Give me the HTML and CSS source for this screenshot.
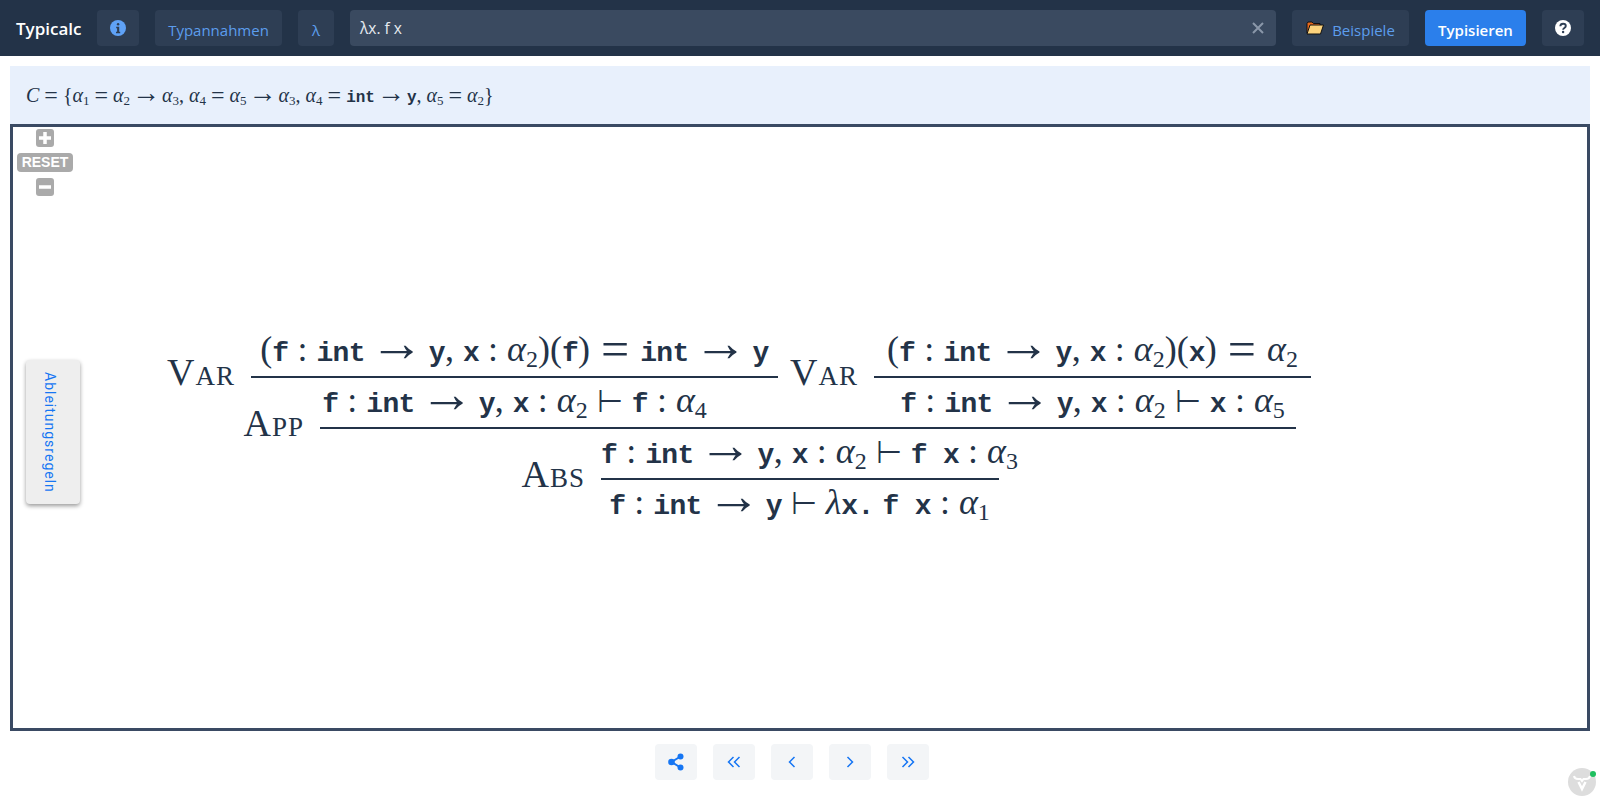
FILE: index.html
```html
<!DOCTYPE html>
<html lang="de">
<head>
    <meta charset="UTF-8">
    <title>Typicalc</title>
    <link rel="stylesheet" href="styles.css">
</head>
<body>
    <header class="topbar">
        <span class="app-title">Typicalc</span>
        <button class="btn btn-icon">
            <svg width="16" height="16" viewBox="0 0 16 16"><circle cx="8" cy="8" r="8" fill="#5fa2f7"/><rect x="6.900" y="3" width="2.400" height="2.400" rx="1.200" fill="#2e3e54"/><path d="M6.200 6.700h3v5h1v1.500H6v-1.500h1.100V8.200h-.9z" fill="#2e3e54"/></svg>
        </button>
        <button class="btn btn-assume">Typannahmen</button>
        <button class="btn btn-lambda">λ</button>
        <div class="term-input">
            <span>λx. f x</span>
            <svg width="12" height="12" viewBox="0 0 12 12"><path d="M1 1l10 10M11 1L1 11" stroke="#8a97a9" stroke-width="2" fill="none"/></svg>
        </div>
        <button class="btn btn-examples">
            <svg width="18" height="14" viewBox="0 0 18 14"><path d="M1 12V2.500L2 1h4l1.500 1.500H14V4" fill="#e8691c" stroke="#111" stroke-width="1"/><path d="M1 13l3-9h13.500l-3 9z" fill="#fcd37c" stroke="#111" stroke-width="1"/></svg>
            <span>Beispiele</span>
        </button>
        <button class="btn btn-primary">Typisieren</button>
        <button class="btn btn-icon">
            <svg width="16" height="16" viewBox="0 0 16 16"><circle cx="8" cy="8" r="8" fill="#fff"/><path d="M5.300 6.200C5.400 4.600 6.600 3.700 8.100 3.700c1.600 0 2.700 1 2.700 2.300 0 2-2.700 2-2.700 3.700" fill="none" stroke="#2e3e54" stroke-width="1.900"/><circle cx="8.100" cy="12" r="1.200" fill="#2e3e54"/></svg>
        </button>
    </header>

    <div class="constraints"><span class="it">C</span> <span class="eq">=</span> {<span class="it">α</span><sub>1</sub> <span class="eq">=</span> <span class="it">α</span><sub>2</sub> <span class="arr">→</span> <span class="it">α</span><sub>3</sub>, <span class="it">α</span><sub>4</sub> <span class="eq">=</span> <span class="it">α</span><sub>5</sub> <span class="arr">→</span> <span class="it">α</span><sub>3</sub>, <span class="it">α</span><sub>4</sub> <span class="eq">=</span> <span class="tt">int</span> <span class="arr">→</span> <span class="tt">y</span>, <span class="it">α</span><sub>5</sub> <span class="eq">=</span> <span class="it">α</span><sub>2</sub>}</div>

    <main class="tree-panel">
        <div class="zoom-controls">
            <span class="zoom-btn">
                <svg width="12" height="12" viewBox="0 0 12 12"><path d="M6 0v12M0 6h12" stroke="#fff" stroke-width="3.500"/></svg>
            </span>
            <span class="zoom-reset">RESET</span>
            <span class="zoom-btn">
                <svg width="12" height="12" viewBox="0 0 12 12"><path d="M0 6h12" stroke="#fff" stroke-width="3.500"/></svg>
            </span>
        </div>

        <button class="rules-tab">Ableitungsregeln</button>

        <div class="tree">
            <div class="tree-row">
                <div class="cell cell-var1"><span>(<span class="tt">f</span> : <span class="tt">int</span> <span class="arr">→</span> <span class="tt">y</span>, <span class="tt">x</span> : <span class="it">α</span><sub>2</sub>)(<span class="tt">f</span>) <span class="eq">=</span> <span class="tt">int</span> <span class="arr">→</span> <span class="tt">y</span></span></div>
                <div class="cell cell-var2"><span>(<span class="tt">f</span> : <span class="tt">int</span> <span class="arr">→</span> <span class="tt">y</span>, <span class="tt">x</span> : <span class="it">α</span><sub>2</sub>)(<span class="tt">x</span>) <span class="eq">=</span> <span class="it">α</span><sub>2</sub></span></div>
            </div>
            <div class="rule-row">
                <span class="rule-name name-var1">Var</span>
                <span class="rule-line line-var1"></span>
                <span class="rule-name name-var2">Var</span>
                <span class="rule-line line-var2"></span>
            </div>
            <div class="tree-row">
                <div class="cell cell-var1"><span><span class="tt">f</span> : <span class="tt">int</span> <span class="arr">→</span> <span class="tt">y</span>, <span class="tt">x</span> : <span class="it">α</span><sub>2</sub> <span class="ts">⊢</span> <span class="tt">f</span> : <span class="it">α</span><sub>4</sub></span></div>
                <div class="cell cell-var2"><span><span class="tt">f</span> : <span class="tt">int</span> <span class="arr">→</span> <span class="tt">y</span>, <span class="tt">x</span> : <span class="it">α</span><sub>2</sub> <span class="ts">⊢</span> <span class="tt">x</span> : <span class="it">α</span><sub>5</sub></span></div>
            </div>
            <div class="rule-row">
                <span class="rule-name name-app">App</span>
                <span class="rule-line line-app"></span>
            </div>
            <div class="tree-row">
                <div class="cell cell-abs-num"><span><span class="tt">f</span> : <span class="tt">int</span> <span class="arr">→</span> <span class="tt">y</span>, <span class="tt">x</span> : <span class="it">α</span><sub>2</sub> <span class="ts">⊢</span> <span class="tt">f x</span> : <span class="it">α</span><sub>3</sub></span></div>
            </div>
            <div class="rule-row">
                <span class="rule-name name-abs">Abs</span>
                <span class="rule-line line-abs"></span>
            </div>
            <div class="tree-row">
                <div class="cell cell-abs-den"><span><span class="tt">f</span> : <span class="tt">int</span> <span class="arr">→</span> <span class="tt">y</span> <span class="ts">⊢</span> <span class="it">λ</span><span class="tt">x.</span> <span class="tt">f x</span> : <span class="it">α</span><sub>1</sub></span></div>
            </div>
        </div>
    </main>

    <nav class="step-nav">
        <button class="nav-btn">
            <svg width="16" height="18" viewBox="0 0 16 18"><path d="M12.500 3.500L3.500 9l9 5.500" fill="none" stroke="#1676f3" stroke-width="2"/><circle cx="12.500" cy="3.500" r="3" fill="#1676f3"/><circle cx="3.500" cy="9" r="3.300" fill="#1676f3"/><circle cx="12.500" cy="14.500" r="3" fill="#1676f3"/></svg>
        </button>
        <button class="nav-btn">
            <svg width="14" height="12" viewBox="0 0 14 12"><path d="M6.500 1L1.500 6l5 5M12.500 1l-5 5 5 5" fill="none" stroke="#1676f3" stroke-width="1.500"/></svg>
        </button>
        <button class="nav-btn">
            <svg width="8" height="12" viewBox="0 0 8 12"><path d="M6.500 1l-5 5 5 5" fill="none" stroke="#1676f3" stroke-width="1.500"/></svg>
        </button>
        <button class="nav-btn">
            <svg width="8" height="12" viewBox="0 0 8 12"><path d="M1.500 1l5 5-5 5" fill="none" stroke="#1676f3" stroke-width="1.500"/></svg>
        </button>
        <button class="nav-btn">
            <svg width="14" height="12" viewBox="0 0 14 12"><path d="M1.500 1l5 5-5 5M7.500 1l5 5-5 5" fill="none" stroke="#1676f3" stroke-width="1.500"/></svg>
        </button>
    </nav>

    <div class="dev-badge">
        <svg width="28" height="28" viewBox="0 0 28 28"><circle cx="14" cy="14" r="14" fill="#ddd"/><path d="M6 8c.5 2.500 2 3 4 3h2.500L14 13l1.500-2H18c2 0 3.500-.5 4-3" fill="none" stroke="#fff" stroke-width="2"/><path d="M10.500 14l3.500 7 3.500-7" fill="none" stroke="#fff" stroke-width="2.500"/></svg>
        <span class="dev-dot"></span>
    </div>
</body>
</html>
```

FILE: styles.css
```css
* {
    box-sizing: border-box;
}
html, body {
    height: 800px;
    overflow: hidden;
}
body {
    margin: 0;
    background: #fff;
    font-family: "Open Sans", sans-serif;
    color: #233348;
}

/* top bar */
.topbar {
    height: 56px;
    background: #233348;
    display: flex;
    align-items: center;
    gap: 16px;
    padding: 0 16px;
}
.app-title {
    color: #fff;
    font-size: 17px;
    font-weight: 600;
    width: 65px;
}
.btn {
    height: 36px;
    border: none;
    border-radius: 4px;
    background: #2e3e54;
    color: #5c9ded;
    font-family: inherit;
    font-size: 15px;
    display: flex;
    align-items: center;
    justify-content: center;
    padding: 0;
}
.btn-icon {
    width: 42px;
}
.btn-assume {
    width: 127px;
    padding-top: 3px;
}
.btn-lambda {
    width: 36px;
    padding-top: 3px;
}
.btn-examples {
    width: 117px;
    gap: 8px;
}
.btn-examples span {
    padding-top: 3px;
}
.btn-primary {
    width: 101px;
    padding-top: 3px;
    background: #2b7feb;
    color: #fff;
    font-weight: 600;
}
.term-input {
    flex: 1;
    height: 36px;
    background: #3a4a60;
    border-radius: 4px;
    color: #e6eaf0;
    font-size: 15.500px;
    display: flex;
    align-items: center;
    justify-content: space-between;
    padding: 0 12px 0 10px;
}

/* constraints */
.constraints {
    height: 58px;
    margin: 10px 10px 0;
    padding: 0 16px;
    background: #e8f0fc;
    white-space: nowrap;
    font-family: "Liberation Serif", serif;
    font-size: 20px;
    line-height: 58px;
}
.constraints sub {
    font-size: 13px;
}
.constraints .tt {
    font-size: 16px;
}
.constraints .arr {
    font-size: 28px;
    margin: 0 -3px;
}
.constraints .eq {
    font-size: 24px;
    vertical-align: -1px;
}
.it {
    font-style: italic;
}
.tt {
    font-family: "Liberation Mono", monospace;
    font-weight: 700;
}
.arr, .eq {
    line-height: 0;
}
sub {
    line-height: 0;
    vertical-align: -0.25em;
}

/* proof tree */
.tree-panel {
    position: relative;
    height: 607px;
    margin: 0 10px;
    border: 3px solid #3a4a63;
    padding: 200px 0 0 152px;
}
.tree {
    font-family: "Liberation Serif", serif;
    font-size: 36px;
}
.tree .tt {
    font-size: 28px;
    letter-spacing: -0.700px;
}
.tree sub {
    font-size: 24px;
}
.tree .arr {
    font-size: 54px;
    margin: 0 -4px;
}
.tree .eq {
    font-size: 50px;
    margin: 0 2px;
    vertical-align: -5px;
}
.ts {
    font-size: 30px;
}
.tree-row {
    display: flex;
    height: 49px;
    line-height: 44px;
    white-space: pre;
}
.cell {
    display: flex;
    justify-content: center;
}
.cell-var1 {
    margin-left: 86px;
    width: 527px;
}
.cell-var2 {
    margin-left: 96px;
    width: 437px;
}
.cell-abs-num {
    margin-left: 436px;
    width: 417px;
}
.cell-abs-den {
    margin-left: 436px;
    width: 397px;
}
.rule-row {
    display: flex;
    align-items: center;
    height: 2px;
}
.rule-line {
    height: 2.500px;
    background: #233348;
}
.rule-name {
    font-variant: small-caps;
    font-size: 38px;
    letter-spacing: 1px;
    line-height: 0;
    position: relative;
    top: -5px;
    width: 70px;
    margin-right: 16px;
    text-align: right;
}
.line-var1 {
    width: 527px;
}
.name-var2 {
    margin-left: 10px;
}
.line-var2 {
    width: 437px;
}
.name-app {
    margin-left: 69px;
}
.line-app {
    width: 976px;
}
.name-abs {
    margin-left: 350px;
}
.line-abs {
    width: 398px;
}

/* svg-pan-zoom controls */
.zoom-controls {
    position: absolute;
    top: 2px;
    left: 4px;
    width: 56px;
    display: flex;
    flex-direction: column;
    align-items: center;
    gap: 6px;
}
.zoom-btn {
    width: 18px;
    height: 18px;
    background: #aaa;
    border-radius: 3px;
    display: flex;
    align-items: center;
    justify-content: center;
}
.zoom-reset {
    width: 56px;
    height: 19px;
    background: #aaa;
    border-radius: 4px;
    color: #fff;
    font-family: "Liberation Sans", sans-serif;
    font-size: 14px;
    font-weight: 700;
    line-height: 19px;
    text-align: center;
}
.rules-tab {
    position: absolute;
    top: 233px;
    left: 13px;
    width: 54px;
    height: 144px;
    border: none;
    border-radius: 4px;
    background: #eee;
    box-shadow: 0 2px 4px rgba(0, 0, 0, 0.4);
    color: #1676f3;
    font-family: Roboto, sans-serif;
    font-size: 14px;
    letter-spacing: 1px;
    writing-mode: vertical-rl;
    padding: 0 6px 0 0;
}

/* step buttons */
.step-nav {
    display: flex;
    justify-content: center;
    gap: 16px;
    margin-top: 13px;
    padding-right: 16px;
}
.nav-btn {
    width: 42px;
    height: 36px;
    border: none;
    border-radius: 4px;
    background: #f3f5f7;
    display: flex;
    align-items: center;
    justify-content: center;
    padding: 0;
}

/* corner badge */
.dev-badge {
    position: absolute;
    left: 1568px;
    top: 768px;
    width: 28px;
    height: 28px;
}
.dev-badge svg {
    display: block;
}
.dev-dot {
    position: absolute;
    top: 3px;
    right: 0;
    width: 6px;
    height: 6px;
    border-radius: 50%;
    background: #1fbf5f;
}
```
